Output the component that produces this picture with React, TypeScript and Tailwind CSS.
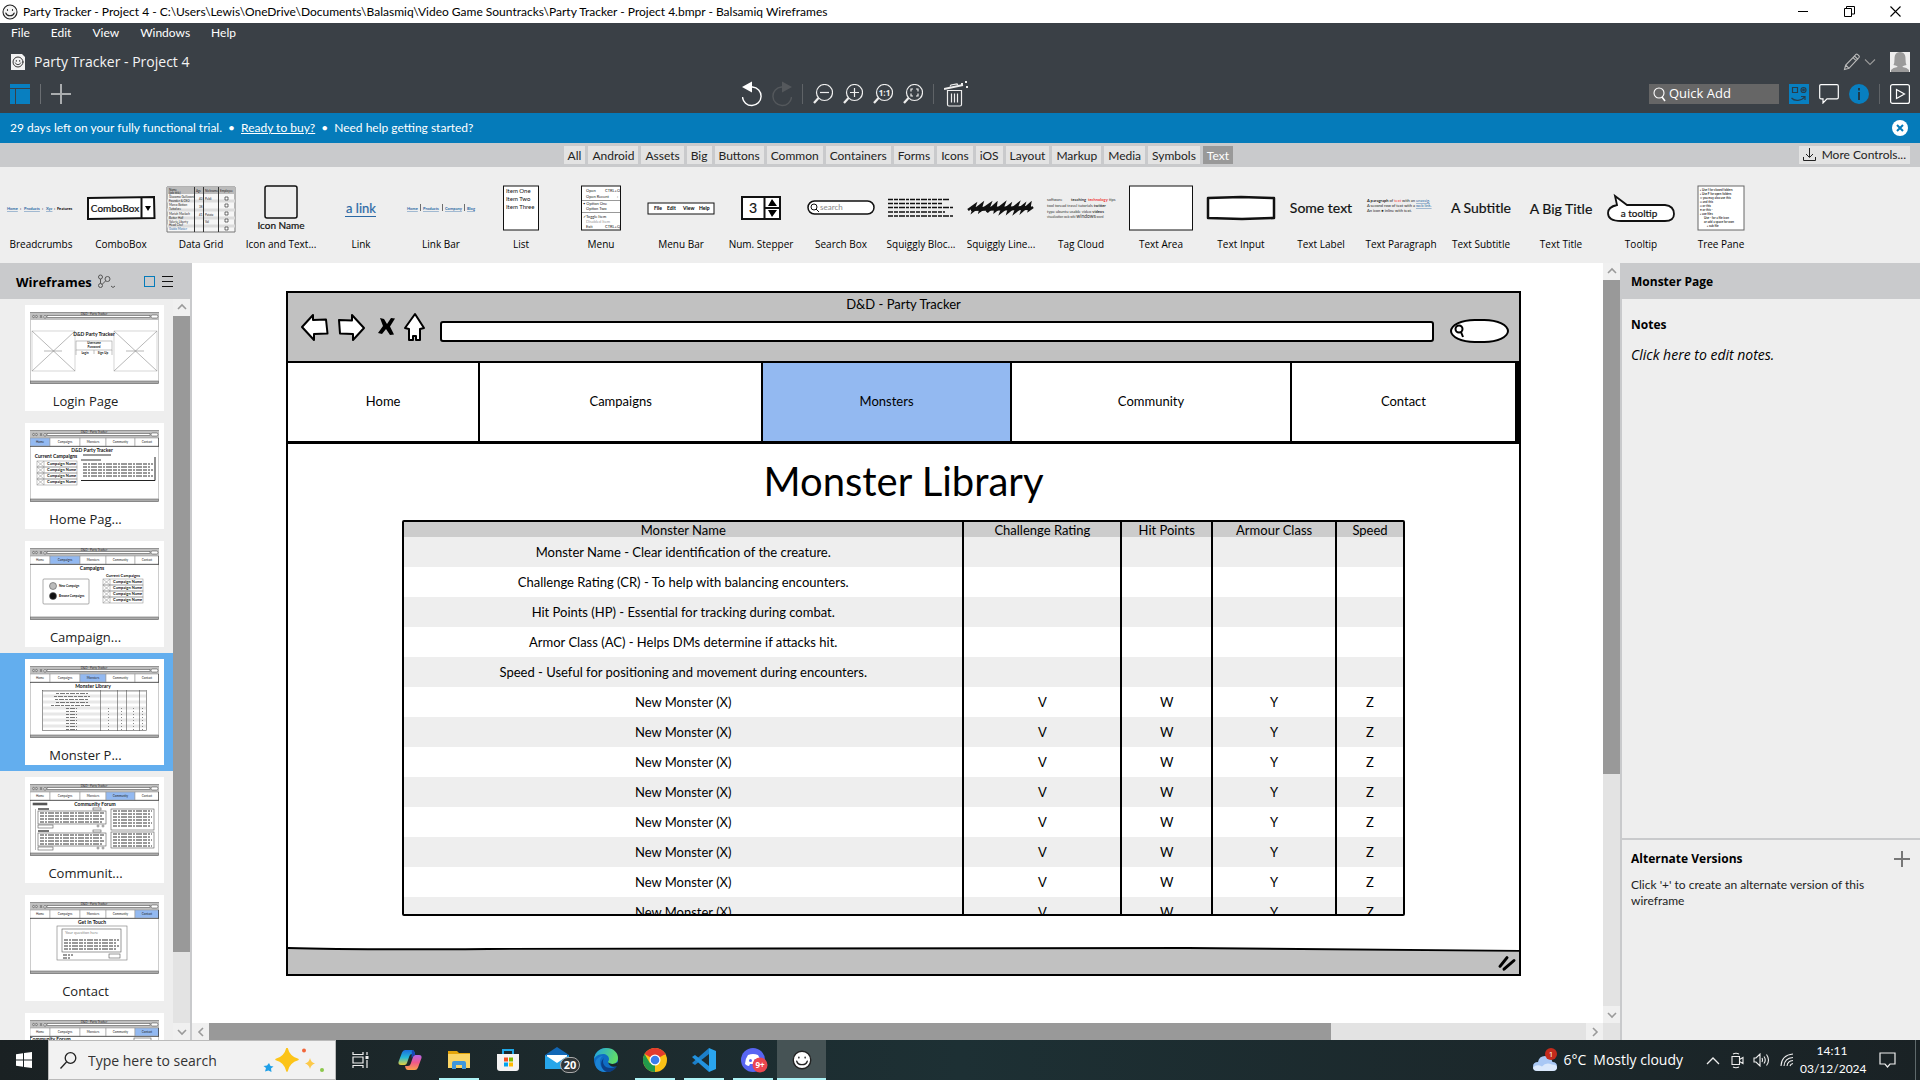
import React from "react";

const TABS = [
  { name: "Home", x: 0, w: 20 },
  { name: "Campaigns", x: 20, w: 30 },
  { name: "Monsters", x: 50, w: 26 },
  { name: "Community", x: 76, w: 29 },
  { name: "Contact", x: 105, w: 24 },
];

const INK = "#111";

/* ---------- small shared icons ---------- */

function Smiley({ size = 16, stroke = "#222", fill = "#f5f5f5" }: { size?: number; stroke?: string; fill?: string }) {
  return (
    <svg width={size} height={size} viewBox="0 0 16 16" fill="none" stroke={stroke} strokeWidth="1.1" strokeLinecap="round">
      <circle cx="8" cy="8" r="7" fill={fill} />
      <ellipse cx="5.5" cy="6" rx="0.6" ry="0.9" fill={stroke} stroke="none" />
      <ellipse cx="10.5" cy="6" rx="0.6" ry="0.9" fill={stroke} stroke="none" />
      <path d="M3.8 9c1 3.6 7.4 3.6 8.4 0" />
    </svg>
  );
}

function Chevron({ dir }: { dir: "up" | "down" | "left" | "right" }) {
  const d = { up: "M2 7l4-4 4 4", down: "M2 4l4 4 4-4", left: "M8 2L4 6l4 4", right: "M4 2l4 4-4 4" }[dir];
  return (
    <svg width="12" height="12" viewBox="0 0 12 12" fill="none" stroke="#9a9a9a" strokeWidth="1.6">
      <path d={d} />
    </svg>
  );
}

function VScroll({ thumb }: { thumb: string }) {
  return (
    <div className="flex w-[17px] shrink-0 flex-col bg-[#e3e3e3]">
      <button aria-label="Scroll up" className="flex h-[17px] items-center justify-center bg-[#f0f0f0]"><Chevron dir="up" /></button>
      <div className="flex-1">
        <div className={`bg-[#999] ${thumb}`} />
      </div>
      <button aria-label="Scroll down" className="flex h-[17px] items-center justify-center bg-[#f0f0f0]"><Chevron dir="down" /></button>
    </div>
  );
}

function Magnifier({ children }: { children: React.ReactNode }) {
  return (
    <svg width="20" height="20" viewBox="0 0 20 20" fill="none" stroke="#eee" strokeWidth="1.2">
      <circle cx="11.5" cy="8.5" r="8" />
      <path d="M5.5 14L1 19" strokeWidth="2.2" />
      {children}
    </svg>
  );
}

/* ---------- header ---------- */

function TitleBar() {
  return (
    <div className="flex h-[23px] shrink-0 items-center bg-white pr-[2px] pl-[2px] text-[12px] leading-4 text-black">
      <Smiley />
      <span className="ml-[5px] flex-1 font-['Lato',sans-serif]">
        Party Tracker - Project 4 - C:\Users\Lewis\OneDrive\Documents\Balasmiq\Video Game Sountracks\Party Tracker - Project 4.bmpr - Balsamiq Wireframes
      </span>
      <button aria-label="Minimise" className="flex h-full w-[46px] items-center justify-center">
        <svg width="11" height="11" viewBox="0 0 11 11" stroke="#000"><path d="M0 5.5h10" /></svg>
      </button>
      <button aria-label="Restore" className="flex h-full w-[46px] items-center justify-center">
        <svg width="11" height="11" viewBox="0 0 11 11" fill="none" stroke="#000"><path d="M.5 2.5h7v8h-7zM2.500 2.500v-2h8v7.500h-2.500" /></svg>
      </button>
      <button aria-label="Close" className="flex h-full w-[46px] items-center justify-center">
        <svg width="11" height="11" viewBox="0 0 11 11" stroke="#000" strokeWidth="1.100"><path d="M.5.5l10 10M10.500.5l-10 10" /></svg>
      </button>
    </div>
  );
}

function Header() {
  return (
    <header className="shrink-0 bg-[#3a4046] pb-[6px] text-white">
      <nav className="flex h-5 items-center gap-[21px] pl-[11px] font-['Lato',sans-serif] text-[12px]">
        {["File", "Edit", "View", "Windows", "Help"].map((m) => (
          <button key={m}>{m}</button>
        ))}
      </nav>
      <div className="flex h-[38px] items-center pr-[10px] pl-[11px]">
        <svg width="14" height="16" viewBox="0 0 14 16" fill="none" stroke="#333" strokeLinecap="round">
          <path d="M0 0h11l3 3v13H0z" fill="#f2f2f2" stroke="none" />
          <circle cx="7" cy="8" r="5" />
          <path d="M5.300 6.500v.8M8.700 6.500v.8M4.300 9c1 2.200 4.400 2.200 5.400 0" />
        </svg>
        <h1 className="ml-[9px] flex-1 text-[14px] leading-[22px] font-normal text-[#f4f4f4]">Party Tracker - Project 4</h1>
        <button aria-label="Edit mode" className="flex items-center gap-1">
          <svg width="17" height="18" viewBox="0 0 17 18" fill="none" stroke="#bbb" strokeWidth="1.100">
            <path d="M1.500 16.500l1.200-4.500L11.500 3l3.200 3L6 15.300zM10 4.600l3.200 3M11.500 3l1.400-1.600q.8-.6 1.600 0l1.500 1.500q.6.8 0 1.600L14.700 6M2.700 12l3.300 3.300" />
          </svg>
          <svg width="12" height="8" viewBox="0 0 12 8" fill="none" stroke="#999" strokeWidth="1.100"><path d="M1 1.500l5 5 5-5" /></svg>
        </button>
        <svg className="ml-[14px]" width="20" height="20" viewBox="0 0 20 20">
          <rect width="20" height="20" fill="#eee" />
          <path d="M10 0C5 0 4.500 4 4.500 7q0 4-1 6Q8 14 7.500 15 3 15.500 1 18v2h18v-2q-2-2.500-6.500-3-.5-1 4-2-1-2-1-6c0-3-.5-7-5.500-7z" fill="#9a9a9a" />
        </svg>
      </div>
      <div className="flex h-[26px] items-center pr-[10px] pl-[10px]">
        <button aria-label="Toggle navigator">
          <svg width="20" height="20" viewBox="0 0 20 20" fill="#087fc0"><path d="M0 0h20v4H0zM0 5h5v15H0zM6 5h14v15H6z" /></svg>
        </button>
        <span className="ml-[10px] h-5 w-px bg-[#6a6e72]" />
        <button aria-label="New wireframe" className="ml-[10px]">
          <svg width="20" height="20" viewBox="0 0 20 20" stroke="#aaadaf" strokeWidth="2"><path d="M10 0v20M0 10h20" /></svg>
        </button>
        <div className="flex flex-1 items-center justify-center gap-[10px] pr-[10px]">
          <button aria-label="Undo">
            <svg width="20" height="26" viewBox="0 0 20 26" fill="none" stroke="#fff" strokeWidth="1.400">
              <path d="M8 6h2.500a9.300 9.300 0 1 1-10 10" /><path d="M0 6l10-5.500v11z" fill="#fff" stroke="none" />
            </svg>
          </button>
          <button aria-label="Redo">
            <svg width="20" height="26" viewBox="0 0 20 26" fill="none" stroke="#54585c" strokeWidth="1.400">
              <path d="M12 6H9.500a9.300 9.300 0 1 0 10 10" /><path d="M20 6l-10-5.500v11z" fill="#54585c" stroke="none" />
            </svg>
          </button>
          <span className="h-5 w-px bg-[#5f6367]" />
          <button aria-label="Zoom out"><Magnifier><path d="M7 8.500h9" /></Magnifier></button>
          <button aria-label="Zoom in"><Magnifier><path d="M7 8.500h9M11.500 4v9" /></Magnifier></button>
          <button aria-label="Actual size">
            <Magnifier><text x="11.500" y="11.500" textAnchor="middle" fontSize="8" fontWeight="700" fill="#eee" stroke="none">1:1</text></Magnifier>
          </button>
          <button aria-label="Zoom to fit"><Magnifier><path d="M10 5H8v2.500M13 5h2v2.500M10 12H8V9.500M13 12h2V9.500" /></Magnifier></button>
          <span className="h-5 w-px bg-[#5f6367]" />
          <button aria-label="Delete">
            <svg width="24" height="26" viewBox="0 0 24 26" fill="none" stroke="#eee" strokeWidth="1.200">
              <path d="M0 8l19-4" strokeWidth="2" /><path d="M6 5.500l1-1.500 6-1.200 1 1" />
              <path d="M3.500 9.500h14v14q0 1.500-1.500 1.500H5q-1.500 0-1.500-1.500zM7.500 12.500v9M10.500 12.500v9M13.500 12.500v9" />
              <path d="M21 0h2v2h-2zM22 5h2v2h-2zM17 2h2v2h-2z" fill="#eee" stroke="none" />
            </svg>
          </button>
        </div>
        <label className="flex h-5 w-[130px] items-center bg-[#666] pl-1">
          <svg width="13" height="15" viewBox="0 0 13 15" fill="none" stroke="#fff" strokeWidth="1.100"><circle cx="6" cy="6" r="5" /><path d="M9 10l3 4" strokeWidth="1.500" /></svg>
          <input aria-label="Quick Add" placeholder="Quick Add" className="ml-[3px] w-24 bg-transparent text-[13px] text-white outline-none placeholder:text-white placeholder:opacity-100" />
        </label>
        <div className="ml-[10px] flex items-center gap-[10px]">
          <button aria-label="UI library">
            <svg width="20" height="20" viewBox="0 0 20 20" fill="none" stroke="#273d4c" strokeWidth="1.200">
              <rect width="20" height="20" fill="#087fc0" stroke="none" />
              <path d="M3.500 3.500h5v5h-5zM2.500 14c3 3.500 10 3 13-1M12 12.500h4v3.500" /><circle cx="14.500" cy="6" r="2.500" /><circle cx="14.500" cy="6" r=".8" />
            </svg>
          </button>
          <button aria-label="Comments">
            <svg width="20" height="20" viewBox="0 0 20 20" fill="none" stroke="#fff" strokeWidth="1.200"><path d="M2 .7h16q1.300 0 1.300 1.300v11.500q0 1.300-1.300 1.300H8L4 19v-4.200H2q-1.300 0-1.300-1.300V2Q.7.7 2 .7z" /></svg>
          </button>
          <button aria-label="Inspector">
            <svg width="20" height="20" viewBox="0 0 20 20"><circle cx="10" cy="10" r="10" fill="#087fc0" /><path d="M9 8h2v8H9zM9 4h2v2.500H9z" fill="#1f3a4a" /></svg>
          </button>
          <span className="h-5 w-px bg-[#5f6367]" />
          <button aria-label="Present">
            <svg width="20" height="20" viewBox="0 0 20 20" fill="none" stroke="#fff" strokeWidth="1.200"><rect x=".6" y=".6" width="18.800" height="18.800" rx="2" /><path d="M6.500 5.500v9l8-4.500z" /></svg>
          </button>
        </div>
      </div>
    </header>
  );
}

function TrialBar() {
  return (
    <div className="flex h-[30px] shrink-0 items-center bg-[#057bba] pr-3 pl-[10px] font-['Lato',sans-serif] text-[12px] leading-[22px] text-white">
      <span>29 days left on your fully functional trial.</span>
      <span className="mx-[6px]">•</span>
      <a href="#buy" className="underline">Ready to buy?</a>
      <span className="mx-[6px]">•</span>
      <span className="flex-1">Need help getting started?</span>
      <button aria-label="Dismiss">
        <svg width="16" height="16" viewBox="0 0 16 16" stroke="#057bba" strokeWidth="2"><circle cx="8" cy="8" r="8" fill="#fff" stroke="none" /><path d="M5 5l6 6M11 5l-6 6" /></svg>
      </button>
    </div>
  );
}

function Categories() {
  const cats = ["All", "Android", "Assets", "Big", "Buttons", "Common", "Containers", "Forms", "Icons", "iOS", "Layout", "Markup", "Media", "Symbols", "Text"];
  return (
    <div className="flex h-6 shrink-0 items-center bg-[#c9cacc] pr-[10px] font-['Lato',sans-serif] text-[12px] leading-5 text-[#222]">
      <div className="flex flex-1 justify-center gap-[3px] pr-[2px]">
        {cats.map((c) => (
          <button key={c} className={c === "Text" ? "h-[18px] bg-[#999] px-1 text-white" : "h-[18px] bg-[#e3e3e3] px-1"}>{c}</button>
        ))}
      </div>
      <button className="flex h-[18px] items-center gap-[6px] bg-[#e3e3e3] px-1">
        <svg width="13" height="14" viewBox="0 0 13 14" fill="none" stroke="#222"><path d="M.5 9v3.500h12V9M6.500 0v9M3 6l3.500 3.500L10 6" /></svg>
        More Controls...
      </button>
    </div>
  );
}

/* ---------- control palette ---------- */

function Squiggle({ d, w = 2 }: { d: string; w?: number }) {
  return <path d={d} stroke={INK} strokeWidth={w} fill="none" />;
}

const BIG = { fontSize: 14, fill: INK, textAnchor: "middle" as const, strokeWidth: 0.2, stroke: INK };

const PALETTE: { label: string; art: React.ReactNode }[] = [
  { label: "Breadcrumbs", art: <g fontSize="4" fontWeight="700"><text y="27" fill="#2b69a5" textDecoration="underline">Home</text><text x="13" y="27">›</text><text x="17" y="27" fill="#2b69a5" textDecoration="underline">Products</text><text x="35" y="27">›</text><text x="39" y="27" fill="#2b69a5" textDecoration="underline">Xyz</text><text x="47" y="27">›</text><text x="50" y="27">Features</text></g> },
  { label: "ComboBox", art: <g><path d="M1 15l66-1 .5 21L1 36z" fill="#fff" stroke={INK} strokeWidth="2" /><path d="M54.500 15v20" stroke={INK} strokeWidth="2" /><path d="M58 23h6l-3 5z" /><text x="28" y="29" {...BIG} fontSize="10">ComboBox</text></g> },
  { label: "Data Grid", art: <g><path d="M0 4h68v45H0z" fill="#f6f6f6" stroke="#777" /><path d="M0 4h68v7H0z" fill="#bbb" /><path d="M0 18h68M0 27h68M0 35h68M0 43h68" stroke="#dcdcdc" strokeWidth="3" /><path d="M27.500 4v45M36.500 4v45M51.500 4v45" stroke="#333" /><g fontSize="3" fill="#222"><text x="2" y="8">Name</text><text x="2" y="11">(job title)</text><text x="29" y="9">Age</text><text x="38" y="9">Nickname</text><text x="53" y="9">Employee</text><text x="2" y="15">Giacomo Guilizzoni</text><text x="2" y="19">Founder &amp; CEO</text><text x="32" y="17">40</text><text x="38" y="17">Peldi</text><text x="2" y="23">Marco Botton</text><text x="2" y="27">Tuttofare</text><text x="32" y="25">38</text><text x="2" y="32">Mariah Maclach</text><text x="2" y="36">Better Half</text><text x="32" y="33">41</text><text x="38" y="33">Patata</text><text x="2" y="40">Valerie Liberty</text><text x="2" y="43">Head Chef</text><text x="38" y="40">Val</text><text x="2" y="47" fill="#2b69a5">Guido Master</text></g><path d="M58 14h3v3h-3zM58 21h3v3h-3zM58 29h3v3h-3zM58 36h3v3h-3zM58 44h3v3h-3z" fill="#fff" stroke="#333" strokeWidth=".7" /></g> },
  { label: "Icon and Text...", art: <g><rect x="18" y="3" width="32" height="32" rx="2" fill="none" stroke={INK} strokeWidth="1.500" /><text x="34" y="46" {...BIG} fontSize="10">Icon Name</text></g> },
  { label: "Link", art: <g><text x="34" y="30" {...BIG} fill="#2b69a5" stroke="#2b69a5" fontSize="13">a link</text><path d="M18 33.500h31" stroke="#2b69a5" strokeWidth="1" /></g> },
  { label: "Link Bar", art: <g fontSize="4" fontWeight="700" fill="#2b69a5"><text y="27" textDecoration="underline">Home</text><text x="16" y="27" textDecoration="underline">Products</text><text x="38" y="27" textDecoration="underline">Company</text><text x="60" y="27" textDecoration="underline">Blog</text><path d="M13.500 21v7M35.500 21v7M57.500 21v7" stroke="#333" strokeWidth=".7" /></g> },
  { label: "List", art: <g><rect x="16.500" y="3" width="35" height="44" fill="#fff" stroke={INK} /><g fontSize="6" fill={INK}><text x="19" y="10">Item One</text><text x="19" y="18">Item Two</text><text x="19" y="26">Item Three</text></g></g> },
  { label: "Menu", art: <g><rect x="14.500" y="3" width="39" height="44" fill="#fff" stroke={INK} /><path d="M15 17.500h38M15 29.500h38" stroke="#999" /><g fontSize="4" fill="#222"><text x="19" y="9">Open</text><text x="38" y="9">CTRL+O</text><text x="19" y="15">Open Recent</text><text x="50" y="15">›</text><text x="16" y="22">• Option One</text><text x="19" y="27">Option Two</text><text x="16" y="35">✓Toggle Item</text><text x="19" y="40" fill="#999">Disabled Item</text><text x="19" y="45">Exit</text><text x="38" y="45">CTRL+Q</text></g></g> },
  { label: "Menu Bar", art: <g><rect x="1" y="20" width="66" height="11" fill="#fff" stroke={INK} /><g fontSize="5" fontWeight="700"><text x="7" y="27">File</text><text x="20" y="27">Edit</text><text x="36" y="27">View</text><text x="52" y="27">Help</text></g></g> },
  { label: "Num. Stepper", art: <g><rect x="15" y="14" width="38" height="22" fill="#fff" stroke={INK} strokeWidth="2" /><path d="M37.500 14v22M38 25h15" stroke={INK} strokeWidth="2" /><path d="M45 16l5 7h-9zM45 34l5-7h-9z" /><text x="26" y="30" {...BIG}>3</text></g> },
  { label: "Search Box", art: <g><rect x="1" y="18" width="66" height="13" rx="6.500" fill="#fff" stroke={INK} strokeWidth="1.500" /><circle cx="7" cy="24" r="3" fill="none" stroke={INK} /><path d="M9 26l3 3" stroke={INK} /><text x="13" y="27" fontSize="8" fill="#888">search</text></g> },
  { label: "Squiggly Bloc...", art: <g strokeDasharray="5 1 4 1 6 1 3 1"><Squiggle d="M1 16.500h61" w={1.500} /><Squiggle d="M1 20.500h55" w={1.500} /><Squiggle d="M1 24.500h66" w={1.500} /><Squiggle d="M1 29h57" w={1.500} /><Squiggle d="M1 33h66" w={1.500} /></g> },
  { label: "Squiggly Line...", art: <g><Squiggle w={4} d="M4 26l60-1" /><Squiggle w={2.500} d="M1 27l7-5-2 6 9-7-2 7 10-7-3 8 9-8-1 7 9-7-3 8 9-7-2 7 10-8-3 8 9-7-2 6 8-7-1 6 4-3" /></g> },
  { label: "Tag Cloud", art: <g fontSize="4" fill="#333"><text y="18">software</text><text x="24" y="18" fontWeight="700">teaching</text><text x="41" y="18" fill="#e33" fontWeight="700">technology</text><text x="62" y="18">tips</text><text y="24">tool toread travel tutorials <tspan fontWeight="700">twitter</tspan></text><text y="30">type ubuntu usable video <tspan fontWeight="700">videos</tspan></text><text y="35" fontSize="3">visualization web wiki <tspan fontSize="5">windows</tspan> word</text></g> },
  { label: "Text Area", art: <rect x="2.500" y="3" width="63" height="44" fill="#fff" stroke={INK} /> },
  { label: "Text Input", art: <path d="M1 15l33-1 33 1v20l-32 1-34-1z" fill="#fff" stroke={INK} strokeWidth="2.500" strokeLinejoin="round" /> },
  { label: "Text Label", art: <text x="34" y="30" {...BIG}>Some text</text> },
  { label: "Text Paragraph", art: <g fontSize="4" fill="#222"><text y="19"><tspan fontWeight="700">A paragraph</tspan> of <tspan fill="#e33">text</tspan> with an <tspan fill="#2b69a5" textDecoration="underline">unassig.</tspan></text><text y="24">A second row of text with a <tspan fill="#2b69a5" textDecoration="underline">web link.</tspan></text><text y="29">An icon ● inline with text.</text></g> },
  { label: "Text Subtitle", art: <text x="34" y="30" {...BIG}>A Subtitle</text> },
  { label: "Text Title", art: <text x="34" y="31" {...BIG}>A Big Title</text> },
  { label: "Tooltip", art: <g><path d="M10 22L8 13l12 9h38q9 1 9 9 0 7-9 7H14Q1 38 1 30q0-6 9-8z" fill="#fff" stroke={INK} strokeWidth="1.800" /><text x="32" y="34" {...BIG} fontSize="10">a tooltip</text></g> },
  { label: "Tree Pane", art: <g><rect x="11" y="3" width="46" height="44" fill="#fff" stroke="#666" /><g fontSize="3" fill="#333" fontWeight="700"><text x="13" y="8">▪ Use f for closed folders</text><text x="13" y="12">▪ Use F for open folders</text><text x="13" y="16">○ you may also use this</text><text x="13" y="20">□ and this</text><text x="13" y="24">□ or this</text><text x="13" y="28">• or this -</text><text x="13" y="32">▪ use files</text><text x="17" y="36">Use - for a file icon</text><text x="17" y="40">or add a space for own</text><text x="20" y="44">▪ sub file</text></g></g> },
];

function Palette() {
  return (
    <div className="flex h-24 shrink-0 overflow-hidden bg-[#eee] pl-px">
      {PALETTE.map((p) => (
        <button key={p.label} className="flex w-20 shrink-0 flex-col items-center pt-4">
          <svg width="70" height="50" viewBox="-1 0 70 50" fontFamily="Lato, sans-serif">{p.art}</svg>
          <span className="mt-1 text-[10px] leading-[14px] whitespace-nowrap text-black">{p.label}</span>
        </button>
      ))}
    </div>
  );
}

/* ---------- wireframe navigator ---------- */

function ThumbFrame({ active, children }: { active?: string; children?: React.ReactNode }) {
  return (
    <svg width="129" height="72" viewBox="0 0 129 72" fontFamily="Lato, sans-serif" fill="none" stroke="#555" strokeWidth=".6">
      <rect x=".5" y=".5" width="128" height="71" fill="#fff" stroke="#aaa" />
      <path d="M0 0h129v8H0z" fill="#bfbfbf" stroke="none" />
      <path d="M0 .5h129" stroke="#777" />
      <text x="64" y="3" fontSize="3" textAnchor="middle" fill="#222" stroke="none">D&amp;D - Party Tracker</text>
      <path d="M2 4.500l2-1.500v3zM6 3l2 1.500L6 6zM10 3l2 3M12 3l-2 3M14 6V4l1-1 1 1v2z" fill="#fff" />
      <rect x="17" y="3.500" width="103" height="2" fill="#fff" />
      <rect x="121" y="3" width="7" height="3" rx="1.500" fill="#fff" />
      {active && (
        <g>
          {TABS.map((t) => (
            <g key={t.name}>
              <rect x={t.x} y="8" width={t.w} height="8" fill={t.name === active ? "#93b9f1" : "#fff"} stroke="#999" />
              <text x={t.x + t.w / 2} y="13" fontSize="3" textAnchor="middle" fill="#222" stroke="none">{t.name}</text>
            </g>
          ))}
          <path d="M0 16.500h129M128.500 8v8" stroke="#222" />
        </g>
      )}
      <rect x=".5" y="69" width="128" height="2.500" fill="#aaa" stroke="#666" />
      {children}
    </svg>
  );
}

function Words({ x, y, w, n, gap = 3 }: { x: number; y: number; w: number; n: number; gap?: number }) {
  return (
    <g stroke="#333" strokeWidth="1" strokeDasharray="4 1 2 1 6 1">
      {Array.from({ length: n }, (_, i) => (
        <path key={i} d={`M${x} ${y + i * gap}h${w - (i % 2) * 2}`} />
      ))}
    </g>
  );
}

function ThumbTitle({ x = 63, y = 22, children }: { x?: number; y?: number; children: string }) {
  return <text x={x} y={y} fontSize="5" fontWeight="700" textAnchor="middle" fill="#111" stroke="none">{children}</text>;
}

function CampaignRows({ x, y }: { x: number; y: number }) {
  return (
    <g>
      {[0, 1, 2, 3].map((i) => (
        <g key={i} stroke="#999">
          <rect x={x} y={y + i * 6} width="40" height="6" />
          <path d={`M${x} ${y + i * 6}l7 6M${x + 7} ${y + i * 6}l-7 6M${x + 7} ${y + i * 6}v6`} />
          <text x={x + 10} y={y + 4 + i * 6} fontSize="4" fontWeight="700" fill="#111" stroke="none">Campaign Name</text>
        </g>
      ))}
    </g>
  );
}

const CARDS = [
  {
    label: "Login Page",
    art: (
      <ThumbFrame>
        {[2, 84].map((x) => (
          <g key={x} stroke="#888"><rect x={x} y="19" width="43" height="40" stroke="#bbb" /><path d={`M${x} 19l43 40M${x + 43} 19l-43 40M${x + 12} 39h18`} /></g>
        ))}
        <ThumbTitle x={64} y={24}>D&D Party Tracker</ThumbTitle>
        <rect x="46" y="29" width="36" height="9" stroke="#999" />
        <g fontSize="3" fill="#111" stroke="none" textAnchor="middle" fontWeight="700"><text x="64" y="32">Username</text><text x="64" y="36">Password</text><text x="55" y="42">Login</text><text x="73" y="42">Sign Up</text></g>
        <path d="M46 38v5M82 38v5M64 38v4" stroke="#999" />
      </ThumbFrame>
    ),
  },
  {
    label: "Home Pag...",
    art: (
      <ThumbFrame active="Home">
        <ThumbTitle x={62}>D&D Party Tracker</ThumbTitle>
        <ThumbTitle x={26} y={28}>Current Campaigns</ThumbTitle>
        <CampaignRows x={7} y={31} />
        <path d="M53 25h28M51 30h20" stroke="#999" strokeWidth="2" /><path d="M51 50.500h74V27" stroke="#222" strokeWidth="1" />
        <Words x={53} y={34} w={70} n={5} />
      </ThumbFrame>
    ),
  },
  {
    label: "Campaign...",
    art: (
      <ThumbFrame active="Campaigns">
        <ThumbTitle x={62}>Campaigns</ThumbTitle>
        <rect x="13" y="31" width="46" height="25" rx="1" stroke="#777" />
        <circle cx="23" cy="38" r="3.500" fill="#bbb" /><circle cx="23" cy="48" r="3.500" fill="#111" />
        <g fontSize="3" fontWeight="700" fill="#111" stroke="none"><text x="29" y="39">New Campaign</text><text x="29" y="49">Browse Campaigns</text><text x="76" y="29" fontSize="4">Current Campaigns</text></g>
        <CampaignRows x={73} y={31} />
      </ThumbFrame>
    ),
  },
  {
    label: "Monster P...",
    art: (
      <ThumbFrame active="Monsters">
        <ThumbTitle>Monster Library</ThumbTitle>
        <rect x="12.500" y="24.500" width="104" height="40" />
        <path d="M13 25h103" stroke="#bbb" strokeWidth="1.500" />
        <path d="M13 30h103M13 36h103M13 42h103M13 48h103M13 54h103M13 60h103" stroke="#e8e8e8" strokeWidth="3" />
        <path d="M70.500 24v41M87.500 24v41M96.500 24v41M109.500 24v41" />
        <g stroke="#555" strokeWidth=".8" strokeDasharray="3 1 5 1"><path d="M26 27.500h32M24 30.500h36M25 33.500h33M26 36.500h32M21 39.500h40M36 42.500h11M36 45.500h11M36 48.500h11M36 51.500h11M36 54.500h11M36 57.500h11M36 60.500h11M36 63.500h11" /></g>
        <path d="M78.500 42v22M91.500 42v22M103.500 42v22M112.500 42v22" strokeDasharray="1 2" strokeWidth="1" stroke="#888" />
      </ThumbFrame>
    ),
  },
  {
    label: "Communit...",
    art: (
      <ThumbFrame active="Community">
        <ThumbTitle x={65}>Community Forum</ThumbTitle>
        <rect x="3" y="19" width="14" height="2" fill="#555" /><path d="M5.500 25v41" stroke="#888" />
        {[26, 48].map((y) => (
          <g key={y}>
            <path d={`M8 ${y - 1}h11`} stroke="#444" strokeWidth="1.500" /><rect x="63" y={y - 2} width="8" height="2" /><rect x="8" y={y + 1} width="68" height="13" />
            <Words x={10} y={y + 3} w={64} n={4} /><rect x="8" y={y + 15} width="15" height="3" /><circle cx="68" cy={y + 16} r="1" /><circle cx="73" cy={y + 16} r="1" />
          </g>
        ))}
        <rect x="81" y="25" width="43" height="21" /><Words x={83} y={27} w={39} n={6} />
        <rect x="81" y="48" width="43" height="16" /><Words x={83} y={50} w={39} n={5} />
      </ThumbFrame>
    ),
  },
  {
    label: "Contact",
    art: (
      <ThumbFrame active="Contact">
        <ThumbTitle x={62}>Get In Touch</ThumbTitle>
        <rect x="27" y="24" width="70" height="34" stroke="#777" /><rect x="32" y="27" width="59" height="23" />
        <text x="35" y="32" fontSize="4" fill="#888" stroke="none">Your question here</text>
        <Words x={34} y={38} w={55} n={4} gap={3} />
        <Words x={33} y={53} w={10} n={2} /><rect x="79" y="52" width="11" height="4" />
      </ThumbFrame>
    ),
  },
  {
    label: "Profile",
    art: (
      <ThumbFrame active="Contact">
        <ThumbTitle x={20} y={21}>Community Forum</ThumbTitle>
        <rect x="104" y="18" width="17" height="4" />
      </ThumbFrame>
    ),
  },
];

function Sidebar() {
  return (
    <aside className="flex w-48 shrink-0 flex-col border-r-2 border-[#c9cacc] bg-[#eee]">
      <div className="flex h-9 shrink-0 items-center bg-[#c9cacc] pt-px pr-[17px] pl-4">
        <h2 className="text-[13px] leading-5 font-bold text-black">Wireframes</h2>
        <svg className="ml-[5px]" width="18" height="15" viewBox="0 0 18 15" fill="none" stroke="#555">
          <circle cx="3.500" cy="3" r="2" /><circle cx="3.500" cy="11.500" r="2" /><circle cx="10.500" cy="5" r="2.500" /><path d="M3.500 5v4.500M8.500 7l-3.500 3.500M14 12l2 1.500 2-1.500" />
        </svg>
        <div className="flex flex-1 items-center justify-end gap-[7px]">
          <button aria-label="Thumbnail view" className="h-[11px] w-[11px] border border-[#057bba]" />
          <button aria-label="List view">
            <svg width="11" height="11" viewBox="0 0 11 11" stroke="#111"><path d="M0 .5h11M0 5.500h11M0 10.500h11" /></svg>
          </button>
        </div>
      </div>
      <div className="flex min-h-0 flex-1">
        <div className="min-w-0 flex-1 overflow-hidden">
          {CARDS.map((c) => (
            <div key={c.label} className={c.label === "Monster P..." ? "bg-[#63aeee] py-[6px] pr-[9px] pl-[25px]" : "py-[6px] pr-[9px] pl-[25px]"}>
              <button className="flex h-[106px] w-full flex-col bg-white pt-[7px] pl-[5px] text-[13px] leading-[18px] text-[#222]">
                {c.art}
                <span className="mt-[8px] w-[111px] text-center">{c.label}</span>
              </button>
            </div>
          ))}
        </div>
        <VScroll thumb="h-[90%]" />
      </div>
    </aside>
  );
}

/* ---------- drawn browser window ---------- */

const NAV = [
  { name: "Home", cls: "w-[193px] border-r-2" },
  { name: "Campaigns", cls: "w-[284px] border-r-2" },
  { name: "Monsters", cls: "w-[250px] border-r-2 bg-[#93b9f1]" },
  { name: "Community", cls: "w-[281px] border-r-2" },
  { name: "Contact", cls: "w-[224px]" },
];

const INTRO = [
  "Monster Name - Clear identification of the creature.",
  "Challenge Rating (CR) - To help with balancing encounters.",
  "Hit Points (HP) - Essential for tracking during combat.",
  "Armor Class (AC) - Helps DMs determine if attacks hit.",
  "Speed - Useful for positioning and movement during encounters.",
];

const ROWS: string[][] = [
  ...INTRO.map((t) => [t, "", "", "", ""]),
  ...Array.from({ length: 8 }, () => ["New Monster (X)", "V", "W", "Y", "Z"]),
];

function MonsterTable() {
  return (
    <div className="h-[396px] overflow-hidden rounded-[2px] border-2 border-black">
      <table className="w-full table-fixed border-collapse text-center text-[13px] leading-[14px] text-black">
        <colgroup>
          <col className="w-[56%]" />
          <col className="w-[15.8%]" />
          <col className="w-[9.1%]" />
          <col className="w-[12.4%]" />
          <col className="w-[6.7%]" />
        </colgroup>
        <thead>
          <tr className="bg-[#ccc]">
            {["Monster Name", "Challenge Rating", "Hit Points", "Armour Class", "Speed"].map((h) => (
              <th key={h} className="h-[15px] border-r-2 border-black p-0 font-normal last:border-r-0">{h}</th>
            ))}
          </tr>
        </thead>
        <tbody>
          {ROWS.map((r, i) => (
            <tr key={i} className="odd:bg-[#eee]">
              {r.map((c, j) => (
                <td key={j} className="h-[30px] border-r-2 border-black p-0 leading-4 last:border-r-0">{c}</td>
              ))}
            </tr>
          ))}
        </tbody>
      </table>
    </div>
  );
}

function BrowserWindow() {
  return (
    <div className="flex min-w-0 flex-1 flex-col border-2 border-black bg-white font-['Lato',sans-serif] text-[13px] text-black">
      <div className="h-[68px] bg-[#c1c1c1]">
        <p className="h-5 text-center leading-[22px]">D&amp;D - Party Tracker</p>
        <div className="flex h-9 items-center pr-[10px] pl-3">
          <svg className="mb-2" width="128" height="30" viewBox="0 0 128 30" fill="#fff" stroke="#000" strokeWidth="2" strokeLinejoin="round">
            <path d="M2 15L13 3v5l13-.500 1.500 14L14 22v6z" />
            <path d="M39 8l13 .500V3l12 13-11 12v-6l-13-.500z" />
            <path d="M80 6l4 1 3 5 4-6 4 .500-5 8 4 8-4 .500-4-6-4 5-4-1 5-7z" fill="#000" stroke="none" />
            <path d="M115 2l9 14-4 1v11h-4v-4h-3v4h-4V17l-4-1z" />
          </svg>
          <input aria-label="Address" className="ml-3 h-[21px] min-w-0 flex-1 rounded-[3px] border-2 border-black bg-white px-1 outline-none" />
          <label className="ml-4 flex h-6 w-[59px] items-center rounded-[50%/60%] border-2 border-black bg-white pl-[2px]">
            <svg width="10" height="14" viewBox="0 0 10 14" fill="none" stroke="#000" strokeWidth="2"><circle cx="5" cy="5" r="3.500" /><path d="M7 8l2 5" /></svg>
            <input aria-label="Search" className="w-8 bg-transparent outline-none" />
          </label>
        </div>
      </div>
      <nav className="flex h-[83px] border-t-2 border-r-4 border-b-[3px] border-black bg-white">
        {NAV.map((n) => (
          <a key={n.name} href="#page" className={`flex shrink grow items-center justify-center border-black ${n.cls}`}>{n.name}</a>
        ))}
      </nav>
      <h2 className="h-[76px] pt-[13px] text-center text-[40px] leading-[48px]">Monster Library</h2>
      <div className="pr-[114px] pl-[114px]"><MonsterTable /></div>
      <svg className="mt-[31px] h-[27px] w-full" viewBox="0 0 1231 28" preserveAspectRatio="none">
        <path d="M0 1Q60 3 200 2L900 1 1231 4v24H0z" fill="#c1c1c1" />
        <path d="M0 1Q60 3 200 2L900 1 1231 4" fill="none" stroke="#000" strokeWidth="2" />
        <path d="M1212 20l7-9M1216 23l10-9" stroke="#000" strokeWidth="3" strokeLinecap="round" />
      </svg>
    </div>
  );
}

function Canvas() {
  return (
    <main className="flex min-w-0 flex-1 flex-col bg-white">
      <div className="flex min-h-0 flex-1">
        <div className="flex min-w-0 flex-1 items-start overflow-hidden pt-7 pr-[82px] pl-[94px]">
          <BrowserWindow />
        </div>
        <VScroll thumb="h-[68%]" />
      </div>
      <div className="flex h-[17px] shrink-0 bg-[#e3e3e3] pr-[17px]">
        <button aria-label="Scroll left" className="flex w-[17px] items-center justify-center bg-[#f0f0f0]"><Chevron dir="left" /></button>
        <div className="flex-1"><div className="h-full w-[81.5%] bg-[#999]" /></div>
        <button aria-label="Scroll right" className="flex w-[17px] items-center justify-center bg-[#f0f0f0]"><Chevron dir="right" /></button>
      </div>
    </main>
  );
}

function Inspector() {
  return (
    <aside className="flex w-[300px] shrink-0 flex-col border-l-2 border-[#c9cacc] bg-[#eee] pb-0 text-black">
      <h2 className="h-9 bg-[#c9cacc] pl-[9px] text-[12px] leading-[38px] font-bold">Monster Page</h2>
      <section className="flex-1 pt-[17px] pl-[9px]">
        <h3 className="text-[12px] leading-[18px] font-bold">Notes</h3>
        <p className="mt-3 text-[14px] leading-[18px] italic">Click here to edit notes.</p>
      </section>
      <section className="h-[202px] border-t-2 border-[#c9cacc] pt-[10px] pr-[10px] pl-[9px]">
        <div className="flex items-center justify-between">
          <h3 className="text-[12px] leading-[18px] font-bold">Alternate Versions</h3>
          <button aria-label="Add alternate version">
            <svg width="16" height="16" viewBox="0 0 16 16" stroke="#777" strokeWidth="2"><path d="M8 0v16M0 8h16" /></svg>
          </button>
        </div>
        <p className="mt-[9px] font-['Lato',sans-serif] text-[12px] leading-4 text-[#222]">Click '+' to create an alternate version of this wireframe</p>
      </section>
    </aside>
  );
}

/* ---------- Windows taskbar ---------- */

const APPS: { name: string; open?: boolean; active?: boolean; icon: React.ReactNode }[] = [
  { name: "Task view", icon: <svg width="18" height="16" viewBox="0 0 18 16" fill="none" stroke="#eee" strokeWidth="1.200"><path d="M1 0v2.500h10V0M1 5h10v6H1zM1 16v-2.500h10V16M15 0v3M15 8v8" /><path d="M13.500 4h3v3h-3z" fill="#eee" stroke="none" /></svg> },
  {
    name: "Copilot",
    icon: (
      <svg width="24" height="22" viewBox="0 0 24 22">
        <defs>
          <linearGradient id="cpa" x1="0" y1="0" x2="0" y2="1"><stop offset="0" stopColor="#1b6de0" /><stop offset=".5" stopColor="#26b8d8" /><stop offset="1" stopColor="#e8d03a" /></linearGradient>
          <linearGradient id="cpb" x1="0" y1="0" x2="0" y2="1"><stop offset="0" stopColor="#b565e8" /><stop offset=".5" stopColor="#f0588a" /><stop offset="1" stopColor="#f9a14a" /></linearGradient>
        </defs>
        <path d="M7 1h7q2 0 2.500 2l.5 2h-3q-2 0-2.600 2L9 14q-.6 2-2.600 2H3q-3 0-2.500-3L4 3.500Q5 1 7 1z" fill="url(#cpa)" />
        <path d="M17 21h-7q-2 0-2.500-2L7 17h3q2 0 2.600-2L15 8q.6-2 2.600-2H21q3 0 2.500 3L20 18.500q-1 2.500-3 2.500z" fill="url(#cpb)" />
        <path d="M14 1q2 0 2.500 2l.8 3Q15 6 14 9l-.5-1z" fill="#1947b8" />
      </svg>
    ),
  },
  { name: "File Explorer", open: true, icon: <svg width="22" height="20" viewBox="0 0 22 20"><path d="M0 1h9l2 2h11v15H0z" fill="#e5a50a" /><path d="M0 4h22v14H0z" fill="#fbd566" /><path d="M4 19v-6q0-2 2-2h10q2 0 2 2v6h-4v-4H8v4z" fill="#3f97dc" /></svg> },
  { name: "Microsoft Store", icon: <svg width="24" height="24" viewBox="0 0 24 24"><path d="M7 6V2h10v4" fill="none" stroke="#1fa8e8" strokeWidth="2" /><path d="M1 6h22v14q0 3-3 3H4q-3 0-3-3z" fill="#f3f3f3" /><path d="M8 9.500h4v4H8z" fill="#f25022" /><path d="M13 9.500h4v4h-4z" fill="#7fba00" /><path d="M8 14.500h4v4H8z" fill="#00a4ef" /><path d="M13 14.500h4v4h-4z" fill="#ffb900" /></svg> },
  { name: "Mail", icon: <svg className="ml-3" width="36" height="28" viewBox="0 0 36 28"><path d="M0 9l12-8 12 8v14H0z" fill="#1267b5" /><path d="M2 9h20v8H2z" fill="#fff" /><path d="M0 9l12 8 12-8v14H0z" fill="#27a6ea" /><rect x="15.500" y="11.500" width="19" height="15" rx="7.500" fill="#303638" stroke="#aaa" /><text x="25" y="23" fontSize="11" fontWeight="700" fill="#fff" textAnchor="middle">20</text></svg> },
  {
    name: "Edge",
    icon: (
      <svg width="24" height="24" viewBox="0 0 24 24">
        <defs><linearGradient id="edg" x1="0" y1="0" x2="1" y2=".3"><stop offset="0" stopColor="#1da0e8" /><stop offset="1" stopColor="#5fdc6a" /></linearGradient></defs>
        <circle cx="12" cy="12" r="12" fill="#0f6cc4" />
        <path d="M0 11C1 4 6 0 12 0c8 0 12 5 12 10 0 4-3 6-6 6-2 0-4-1-4-2 0-1 1-1 1-3 0-3-3-5-6-5-5 0-8 3-9 5z" fill="url(#edg)" />
        <path d="M9 8c-5 3-4 13 4 15.500-3 1-7 0-9-2C-1 17 1 9 9 8z" fill="#1b83d4" />
        <path d="M10 10c-3 5 1 11 8 10 2 0 4-2 5-2-2 4-6 6-10 6-6-2-8-10-3-14z" fill="#0c3f86" />
        <path d="M14 14c1 2 6 3 10 0l-1 4c-4 2-8 0-9-4z" fill="#1b2628" />
      </svg>
    ),
  },
  { name: "Chrome", open: true, icon: <svg width="24" height="24" viewBox="0 0 24 24"><circle cx="12" cy="12" r="12" fill="#fbc116" /><path d="M12 12L1.600 6A12 12 0 0 1 22.400 6z" fill="#e33b2e" /><path d="M12 12v12A12 12 0 0 1 1.600 6l5.200 9z" fill="#229a4b" /><path d="M12 24l5.200-9L12 12z" fill="#fbc116" /><path d="M12 6.500h10.600L22 5.500 12 5z" fill="#e33b2e" /><circle cx="12" cy="12" r="5.500" fill="#fff" /><circle cx="12" cy="12" r="4.300" fill="#3b7ded" /></svg> },
  { name: "Visual Studio Code", open: true, icon: <svg width="24" height="24" viewBox="0 0 24 24"><path d="M17 0l7 3v18l-7 3z" fill="#2aa5ef" /><path d="M17 0v6L3 17l-3-2z" fill="#1c7fc9" /><path d="M17 24v-6L3 7 0 9z" fill="#2292de" /></svg> },
  { name: "Discord", open: true, icon: <svg className="ml-1" width="27" height="25" viewBox="0 0 27 25"><circle cx="12" cy="12" r="12" fill="#5865f2" /><path d="M7 7q5-2 10 0 3 4 3 9-2 2-4 2l-1-2H9l-1 2q-2 0-4-2 0-5 3-9z" fill="#fff" /><circle cx="9.500" cy="12.500" r="1.500" fill="#5865f2" /><circle cx="14.500" cy="12.500" r="1.500" fill="#5865f2" /><circle cx="19" cy="17" r="7.500" fill="#ed4650" /><text x="19" y="20" fontSize="8" fontWeight="700" fill="#fff" textAnchor="middle">9+</text></svg> },
  { name: "Balsamiq Wireframes", open: true, active: true, icon: <Smiley size={20} fill="#fff" stroke="#222" /> },
];

function Taskbar() {
  return (
    <footer className="flex h-10 shrink-0 items-stretch bg-gradient-to-r from-[#1a2123] via-[#1d3034] to-[#1a2225] text-white">
      <button aria-label="Start" className="flex w-12 items-center justify-center">
        <svg width="16" height="16" viewBox="0 0 16 16" fill="#fff"><path d="M0 2.300l7-1v6.200H0zM8 1.100L16 0v7.500H8zM0 8.500h7v6.200l-7-1zM8 8.500h8V16l-8-1.100z" /></svg>
      </button>
      <label className="flex w-72 items-center border border-[#bbb] bg-[#f2f2f2] pl-[11px]">
        <svg width="17" height="17" viewBox="0 0 17 17" fill="none" stroke="#222" strokeWidth="1.300"><circle cx="10.500" cy="6" r="5.300" /><path d="M6.500 10L.5 16.500" /></svg>
        <input aria-label="Type here to search" placeholder="Type here to search" className="ml-[11px] w-[165px] bg-transparent text-[14px] outline-none placeholder:text-[#333] placeholder:opacity-100" />
        <svg className="ml-[10px]" width="62" height="24" viewBox="0 0 62 24">
          <path d="M24 0q2 9 11 11.500Q26 14 24 23q-2-9-11-11.500Q22 9 24 0z" fill="#fcc419" stroke="#fcc419" strokeWidth="1.500" strokeLinejoin="round" />
          <path d="M47 10q1 4.500 5 5.500-4 1-5 5.500-1-4.500-5-5.500 4-1 5-5.500z" fill="#fcc94a" />
          <path d="M6 15l1.500 3 3 .500-2.500 2 .5 3.500-3-1.500-3.500 1L3 20l-2.500-2 3.500-.500z" fill="#1fa0e8" />
          <circle cx="41" cy="2.500" r="2" fill="#f2663a" /><circle cx="59" cy="22" r="2" fill="#8cc84b" />
        </svg>
      </label>
      {APPS.map((a) => (
        <button
          key={a.name}
          aria-label={a.name}
          className={`flex w-[49px] items-center justify-center ${a.active ? "bg-[#465355]" : ""}`}
        >
          <span className={a.open ? (a.active ? "flex h-full w-full items-center justify-center border-b-2 border-[#aef3f6] pt-[2px]" : "flex h-full w-10 items-center justify-center border-b-2 border-[#aef3f6] pt-[2px]") : "flex h-full w-full items-center justify-center"}>
            {a.icon}
          </span>
        </button>
      ))}
      <div className="flex flex-1 items-center justify-end">
        <button className="flex items-center text-[14px] leading-5">
          <svg width="26" height="24" viewBox="0 0 26 24"><path d="M6 23q-5 0-5-4.500T6 14q1-6 7-6t7.500 6q4.500 0 4.500 4.500T20 23z" fill="#a9c8f5" /><path d="M6 23q-5 0-5-3.500 4-4 9-1 4-5 10-2 5 0 5 3 0 3.500-5 3.500z" fill="#dbe9fc" /><circle cx="19" cy="6" r="6" fill="#c42b1c" /><text x="19" y="9" fontSize="8" fill="#fff" textAnchor="middle">1</text></svg>
          <span className="ml-[5px]">6°C</span>
          <span className="ml-[7px]">Mostly cloudy</span>
        </button>
        <button aria-label="Show hidden icons" className="ml-[23px]">
          <svg width="14" height="9" viewBox="0 0 14 9" fill="none" stroke="#eee" strokeWidth="1.300"><path d="M1 8l6-6 6 6" /></svg>
        </button>
        <svg className="ml-[11px]" width="13" height="17" viewBox="0 0 13 17" fill="none" stroke="#eee" strokeWidth="1.100"><path d="M1 4.500h7.500v8H1zM8.500 7.500l3.500-2v6l-3.500-2M2 2q3-1.500 6 0M2 15q3 1.500 6 0" /></svg>
        <svg className="ml-[9px]" width="17" height="14" viewBox="0 0 17 14" fill="none" stroke="#eee" strokeWidth="1.100"><path d="M1 5h2l4-4v12L3 9H1zM9 5q1 2 0 4M11 3.500q2.500 3.500 0 7M13.500 1.500q4 5.500 0 11" /></svg>
        <svg className="ml-[10px]" width="14" height="14" viewBox="0 0 14 14" fill="none" stroke="#eee" strokeWidth="1.100"><path d="M1 13Q1.500 2 13 1M4 13q.5-8 9-8.500M7 13q.5-5 6-5.500M10 13q.5-2 3-2.500" /></svg>
        <div className="ml-[6px] w-[64px] text-center font-['Lato',sans-serif] text-[12px] leading-[18px]">
          <p>14:11</p>
          <p>03/12/2024</p>
        </div>
        <button aria-label="Notifications" className="ml-[15px]">
          <svg width="17" height="17" viewBox="0 0 17 17" fill="none" stroke="#eee" strokeWidth="1.200"><path d="M1 1h15v11h-5l-2.500 3L6 12H1z" /></svg>
        </button>
        <span className="ml-[19px] h-full w-px bg-[#5f696b]" />
        <span className="w-1" />
      </div>
    </footer>
  );
}

export default function App() {
  return (
    <div className="flex h-screen flex-col overflow-hidden font-['Open_Sans',sans-serif]">
      <TitleBar />
      <Header />
      <TrialBar />
      <Categories />
      <Palette />
      <div className="flex min-h-0 flex-1">
        <Sidebar />
        <Canvas />
        <Inspector />
      </div>
      <Taskbar />
    </div>
  );
}
